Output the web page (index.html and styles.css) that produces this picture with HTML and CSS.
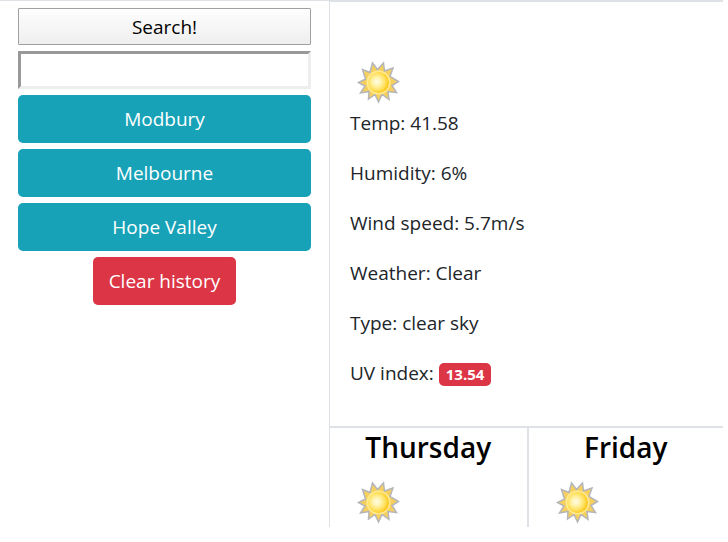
FILE: index.html
```html
<!DOCTYPE html>
<html lang="en">
<head>
<meta charset="utf-8">
<title>Weather Dashboard</title>
<link rel="stylesheet" href="styles.css">
</head>
<body>
<svg class="defs" aria-hidden="true">
  <defs>
    <radialGradient id="disc" cx="0.42" cy="0.46" r="0.6">
      <stop offset="0" stop-color="#fffce6"/>
      <stop offset="0.3" stop-color="#fff4b4"/>
      <stop offset="0.7" stop-color="#ffdf58"/>
      <stop offset="1" stop-color="#fcbe08"/>
    </radialGradient>
    <symbol id="sun" viewBox="-28 -25 56 50">
      <g transform="translate(0.5 0.5)">
        <path d="M0 19.500L-3.500 12L-10 16.500L-9.500 9L-18 10.500L-13.500 3.500L-20 0L-13 -3.500L-16 -13L-8.500 -10L-6 -19.500L-1 -13L5 -19.500L6 -11.500L14.500 -14.500L11.500 -6L20 -1L13.500 3L18 10L9.500 9L10.500 17L3.500 12Z" fill="#f7cf5c" stroke="#b4b6ba" stroke-width="1.500"/>
        <circle r="12" fill="#ffeb96"/>
        <circle r="10.500" fill="url(#disc)"/>
      </g>
    </symbol>
  </defs>
</svg>
<div class="dashboard">
  <aside class="sidebar">
    <button class="search" type="button">Search!</button>
    <input class="city" type="text" aria-label="City">
    <button class="btn info" type="button">Modbury</button>
    <button class="btn info" type="button">Melbourne</button>
    <button class="btn info" type="button">Hope Valley</button>
    <button class="btn danger" type="button">Clear history</button>
  </aside>
  <main class="weather">
    <section class="current">
      <svg class="icon" role="img" aria-label="Clear sky"><use href="#sun"/></svg>
      <p>Temp: 41.58</p>
      <p>Humidity: 6%</p>
      <p>Wind speed: 5.7m/s</p>
      <p>Weather: Clear</p>
      <p>Type: clear sky</p>
      <p>UV index: <span class="badge">13.54</span></p>
    </section>
    <div class="forecast">
      <section class="day">
        <h2>Thursday</h2>
        <svg class="icon" role="img" aria-label="Clear sky"><use href="#sun"/></svg>
      </section>
      <section class="day">
        <h2>Friday</h2>
        <svg class="icon" role="img" aria-label="Clear sky"><use href="#sun"/></svg>
      </section>
    </div>
  </main>
</div>
</body>
</html>
```
FILE: styles.css
```css
* {
  box-sizing: border-box;
}

body {
  margin: 0;
  padding-right: 5px;
  background: #fff;
  color: #212529;
  font-family: "Segoe UI", "Open Sans", "Noto Sans", sans-serif;
  font-size: 19px;
  line-height: 26px;
}

.defs {
  position: absolute;
  width: 0;
  height: 0;
}

.dashboard {
  display: grid;
  grid-template-columns: 329fr 394fr;
}

.sidebar {
  display: flex;
  flex-direction: column;
  gap: 6px;
  padding: 7px 18px;
  border-top: 1px solid #dee2e6;
}

.sidebar button,
.city {
  width: 100%;
  font: inherit;
}

.search {
  height: 37px;
  padding: 0;
  border: 1px solid #a0a0a0;
  border-radius: 1px;
  background: linear-gradient(#fefefe, #eee);
  color: #000;
}

.city {
  height: 38px;
  padding: 0 4px;
  border: 3px solid;
  border-color: #999 #eee #eee #999;
  background: #fff;
}

.btn {
  height: 48px;
  padding: 0 16px;
  border: 0;
  border-radius: 5px;
  color: #fff;
}

.info {
  background: #17a2b8;
}

.sidebar .danger {
  align-self: center;
  width: auto;
  background: #dc3545;
}

.weather {
  border-top: 2px solid #dee2e6;
  border-left: 1px solid #dee2e6;
}

.current {
  padding: 55px 20px 16px;
}

.icon {
  display: block;
  width: 56px;
  height: 50px;
}

.current p {
  margin: 3px 0 24px;
}

.current p + p {
  margin-top: 24px;
}

.badge {
  display: inline-block;
  padding: 0 7px;
  border-radius: 5px;
  background: #dc3545;
  color: #fff;
  font-size: 15px;
  font-weight: 700;
  line-height: 23px;
}

.forecast {
  display: grid;
  grid-template-columns: 1fr 1fr;
  border-top: 2px solid #dee2e6;
}

.day {
  padding: 1px 20px 0;
}

.day + .day {
  border-left: 2px solid #dee2e6;
}

.day h2 {
  margin: 0 0 12px;
  color: #000;
  font-size: 28px;
  font-weight: 600;
  line-height: 36px;
  text-align: center;
}
```
